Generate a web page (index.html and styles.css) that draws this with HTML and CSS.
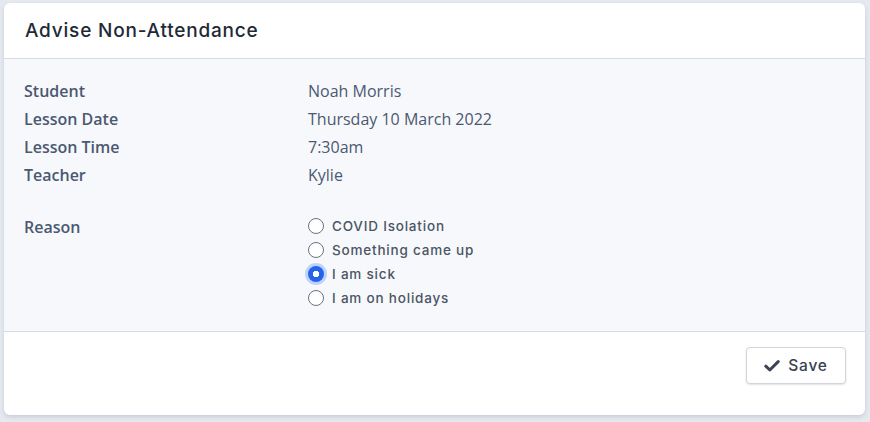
FILE: index.html
```html
<!DOCTYPE html>
<html>
<head>
<meta charset="utf-8">
<link rel="stylesheet" href="styles.css">
</head>
<body>
<div class="card">
  <div class="card-header">Advise Non-Attendance</div>
  <div class="card-body">
    <div class="row"><div class="label">Student</div><div class="value">Noah Morris</div></div>
    <div class="row"><div class="label">Lesson Date</div><div class="value">Thursday 10 March 2022</div></div>
    <div class="row"><div class="label">Lesson Time</div><div class="value">7:30am</div></div>
    <div class="row"><div class="label">Teacher</div><div class="value">Kylie</div></div>
    <div class="row reason">
      <div class="label">Reason</div>
      <div class="options">
        <label class="option"><span class="radio"></span>COVID Isolation</label>
        <label class="option"><span class="radio"></span>Something came up</label>
        <label class="option"><span class="radio checked"></span>I am sick</label>
        <label class="option"><span class="radio"></span>I am on holidays</label>
      </div>
    </div>
  </div>
  <div class="card-footer">
    <button class="btn"><svg width="16" height="14" viewBox="0 0 16 14"><path d="M1.8 7.2 L5.8 11 L14.2 2.6" fill="none" stroke="#3b4556" stroke-width="3" stroke-linecap="round" stroke-linejoin="round"/></svg><span>Save</span></button>
  </div>
</div>
</body>
</html>
```
FILE: styles.css
```css
* { box-sizing: border-box; }
html, body { margin: 0; padding: 0; }
body {
  background: #e5eaf1;
  padding: 3px 5px 0 4px;
  height: 422px;
  overflow: hidden;
}
.card {
  background: #fff;
  border-radius: 6px;
  height: 412px;
  box-shadow: 0 2px 4px rgba(60, 72, 100, 0.18);
  overflow: hidden;
  display: flex;
  flex-direction: column;
}
.card-header {
  height: 56px;
  border-bottom: 1px solid #d5dce6;
  padding: 0 21px;
  display: flex;
  align-items: center;
  font-family: "Inter", sans-serif;
  font-weight: 500;
  font-size: 19px;
  letter-spacing: 0.8px;
  color: #1f2937;
}
.card-body {
  background: #f7f8fc;
  border-bottom: 1px solid #d5dce6;
  padding: 18px 20px 20px 20px;
  height: 273px;
}
.row {
  display: grid;
  grid-template-columns: 284px 1fr;
  line-height: 28px;
  font-family: "Open Sans", sans-serif;
  font-size: 16px;
  color: #4a5568;
}
.label { font-weight: 600; color: #4b5871; }
.value { color: #4b5871; }
.reason { margin-top: 24px; }
.options { display: flex; flex-direction: column; padding-top: 1px; }
.option {
  display: flex;
  align-items: center;
  height: 24px;
  font-family: "Inter", sans-serif;
  font-size: 13.5px;
  font-weight: 500;
  letter-spacing: 0.8px;
  color: #4b5563;
}
.radio {
  width: 16px;
  height: 16px;
  border: 1px solid #6b7280;
  border-radius: 50%;
  background: #fff;
  margin-right: 8px;
  flex: none;
}
.radio.checked {
  border: none;
  background: #2563eb radial-gradient(circle, #fff 0 3px, transparent 3.5px);
  box-shadow: 0 0 0 3px #bfd3fa;
}
.card-footer {
  flex: 1;
  display: flex;
  justify-content: flex-end;
  align-items: flex-start;
  padding: 15px 19px 0 0;
}
.btn {
  width: 100px;
  height: 37px;
  background: #fff;
  border: 1px solid #d1d5db;
  border-radius: 4px;
  box-shadow: 0 1px 2px rgba(0,0,0,0.12);
  display: flex;
  align-items: center;
  justify-content: center;
  gap: 8px;
  font-family: "Inter", sans-serif;
  font-size: 15.5px;
  font-weight: 500;
  letter-spacing: 0.8px;
  color: #374151;
  padding: 0;
}
```
